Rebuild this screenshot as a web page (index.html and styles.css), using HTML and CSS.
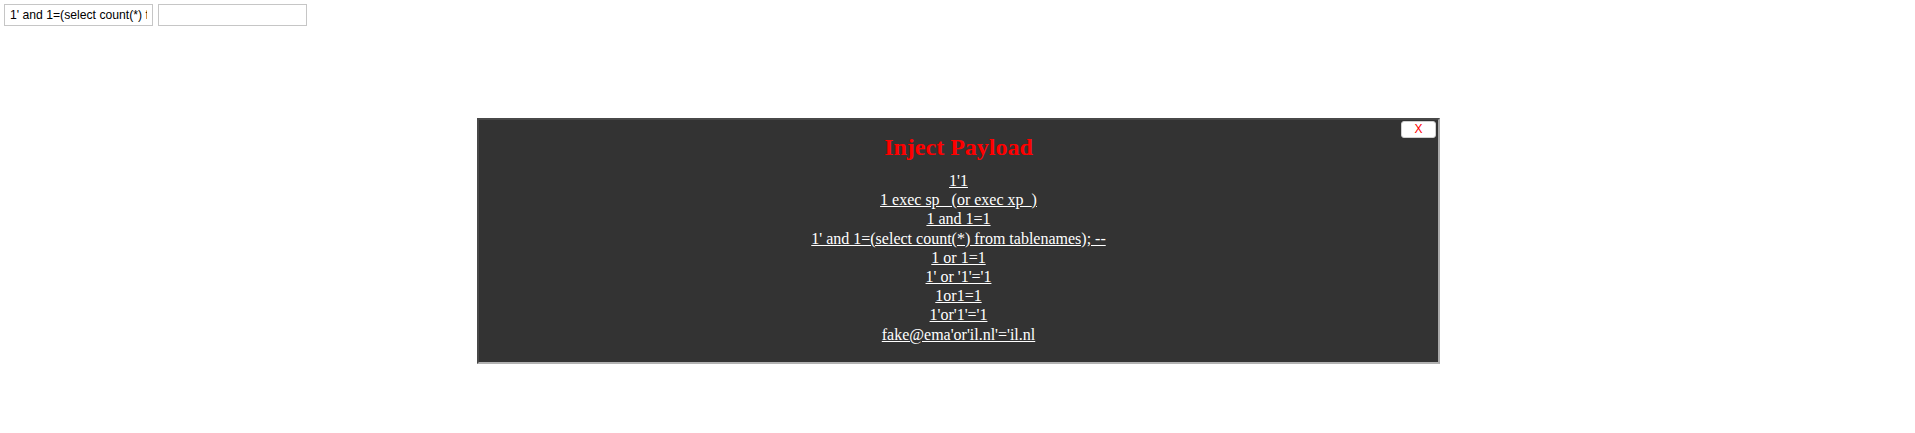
FILE: index.html
```html
<!DOCTYPE html>
<html>
<head>
<meta charset="utf-8">
<title>Inject Payload</title>
<link rel="stylesheet" href="styles.css">
</head>
<body>
<div class="topbar">
  <input class="field" type="text" spellcheck="false" value="1' and 1=(select count(*) from tablenames); --">
  <input class="field" type="text" spellcheck="false" value="">
</div>
<div class="dialog">
  <button class="close" type="button">X</button>
  <h2 class="title">Inject Payload</h2>
  <div class="list">
    <a class="item" href="#">1'1</a>
    <a class="item" href="#">1 exec sp_ (or exec xp_)</a>
    <a class="item" href="#">1 and 1=1</a>
    <a class="item" href="#">1' and 1=(select count(*) from tablenames); --</a>
    <a class="item" href="#">1 or 1=1</a>
    <a class="item" href="#">1' or '1'='1</a>
    <a class="item" href="#">1or1=1</a>
    <a class="item" href="#">1'or'1'='1</a>
    <a class="item" href="#">fake@ema'or'il.nl'='il.nl</a>
  </div>
</div>
</body>
</html>
```

FILE: styles.css
```css
html, body {
  margin: 0;
  padding: 0;
  background: #ffffff;
}

body {
  font-family: "Liberation Serif", "Times New Roman", serif;
}

.topbar {
  display: flex;
  gap: 5px;
  padding: 4px 0 0 4px;
}

.field {
  box-sizing: border-box;
  width: 149px;
  height: 22px;
  margin: 0;
  padding: 0 5px;
  border: 1px solid #c6c6c6;
  border-radius: 0;
  font-family: "Liberation Sans", Arial, sans-serif;
  font-size: 12.2px;
  color: #000000;
  background: #ffffff;
  outline: none;
}

.dialog {
  position: relative;
  box-sizing: border-box;
  width: 963px;
  margin: 92px 0 0 477px;
  padding: 13px 0 18px;
  background: #333333;
  border: 2px solid;
  border-color: #484848 #aaaaaa #b2b2b2 #484848;
  text-align: center;
  color: #ffffff;
}

.close {
  position: absolute;
  top: 1px;
  right: 2px;
  box-sizing: border-box;
  width: 35px;
  height: 17px;
  margin: 0;
  padding: 0;
  background: #ffffff;
  border: 1px solid #d0d0d0;
  border-radius: 3px;
  font-family: "Liberation Sans", Arial, sans-serif;
  font-size: 12px;
  line-height: 15px;
  color: #ff0000;
}

.title {
  margin: 0 0 10px;
  font-size: 24px;
  line-height: 28px;
  font-weight: bold;
  color: #ff0000;
}

.list {
  display: flex;
  flex-direction: column;
  align-items: center;
}

.item {
  font-size: 16px;
  line-height: 19.2px;
  color: #ffffff;
  text-decoration: underline;
  white-space: pre;
}
```
